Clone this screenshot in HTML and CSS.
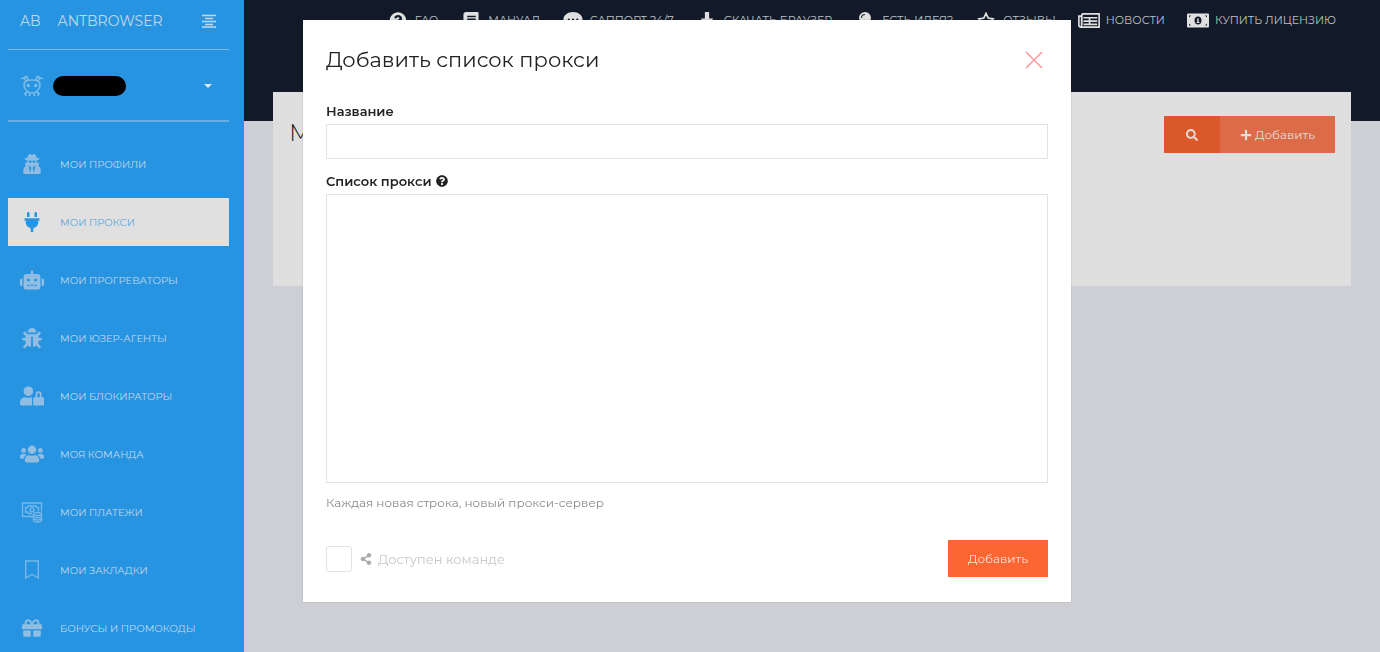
FILE: index.html
```html
<!DOCTYPE html>
<html lang="ru">
<head>
    <meta charset="UTF-8">
    <meta name="viewport" content="width=device-width, initial-scale=1.0">
    <title>Мои прокси - AntBrowser</title>
    <link rel="stylesheet" href="styles.css">
</head>
<body>
    <!-- Иконки -->
    <svg class="sprite" aria-hidden="true">
        <symbol id="question" viewBox="0 0 512 512"><path d="M504 256c0 136.997-111.043 248-248 248S8 392.997 8 256C8 119.083 119.043 8 256 8s248 111.083 248 248zM262.655 90c-54.497 0-89.255 22.957-116.549 63.758-3.536 5.286-2.353 12.415 2.715 16.258l34.699 26.31c5.205 3.947 12.621 3.008 16.665-2.122 17.864-22.658 30.113-35.797 57.303-35.797 20.429 0 45.698 13.148 45.698 32.958 0 14.976-12.363 22.667-32.534 33.976C247.128 238.528 216 254.941 216 296v4c0 6.627 5.373 12 12 12h56c6.627 0 12-5.373 12-12v-1.333c0-28.462 83.186-29.647 83.186-106.667 0-58.002-60.165-102-116.531-102zM256 338c-25.365 0-46 20.635-46 46 0 25.364 20.635 46 46 46s46-20.636 46-46c0-25.365-20.635-46-46-46z"/></symbol>
        <symbol id="plug" viewBox="0 0 384 512"><path d="M320 32a32 32 0 0 0-64 0v96h64zm48 128H16A16 16 0 0 0 0 176v32a16 16 0 0 0 16 16h16v32a160.07 160.07 0 0 0 128 156.8V512h64v-99.2A160.07 160.07 0 0 0 352 256v-32h16a16 16 0 0 0 16-16v-32a16 16 0 0 0-16-16zM128 32a32 32 0 0 0-64 0v96h64z"/></symbol>
        <symbol id="robot" viewBox="0 0 640 512"><path d="M32 224h32v192H32a32 32 0 0 1-32-32V256a32 32 0 0 1 32-32zm512-48v272a64 64 0 0 1-64 64H160a64 64 0 0 1-64-64V176a80 80 0 0 1 80-80h112V32a32 32 0 0 1 64 0v64h112a80 80 0 0 1 80 80zM264 256a40 40 0 1 0-40 40 40 40 0 0 0 40-40zm-8 128h-64v32h64zm96 0h-64v32h64zm104-128a40 40 0 1 0-40 40 40 40 0 0 0 40-40zm-8 128h-64v32h64zm192-128v128a32 32 0 0 1-32 32h-32V224h32a32 32 0 0 1 32 32z"/></symbol>
        <symbol id="bug" viewBox="0 0 512 512"><path d="M511.988 288.9c-.478 17.43-15.217 31.1-32.653 31.1H424v16c0 21.864-4.882 42.584-13.6 61.145l60.228 60.228c12.496 12.497 12.496 32.758 0 45.255-12.498 12.497-32.759 12.496-45.256 0l-54.736-54.736C345.886 467.965 314.351 480 280 480V236c0-6.627-5.373-12-12-12h-24c-6.627 0-12 5.373-12 12v244c-34.351 0-65.886-12.035-90.636-32.108l-54.736 54.736c-12.498 12.497-32.759 12.496-45.256 0-12.496-12.497-12.496-32.758 0-45.255l60.228-60.228C92.882 378.584 88 357.864 88 336v-16H32.666C15.23 320 .491 306.33.013 288.9-.484 270.816 14.028 256 32 256h56v-58.745l-46.628-46.628c-12.496-12.497-12.496-32.758 0-45.255 12.498-12.497 32.758-12.497 45.256 0L141.255 160h229.489l54.627-54.627c12.498-12.497 32.758-12.497 45.256 0 12.496 12.497 12.496 32.758 0 45.255L424 197.255V256h56c17.972 0 32.484 14.816 31.988 32.9zM257 0c-61.856 0-112 50.144-112 112h224C369 50.144 318.856 0 257 0z"/></symbol>
        <symbol id="users" viewBox="0 0 640 512"><path d="M96 224c35.3 0 64-28.7 64-64s-28.7-64-64-64-64 28.7-64 64 28.7 64 64 64zm448 0c35.3 0 64-28.7 64-64s-28.7-64-64-64-64 28.7-64 64 28.7 64 64 64zm32 32h-64c-17.6 0-33.5 7.1-45.1 18.6 40.3 22.1 68.9 62 75.1 109.4h66c17.7 0 32-14.3 32-32v-32c0-35.3-28.7-64-64-64zm-256 0c61.9 0 112-50.1 112-112S381.9 32 320 32 208 82.1 208 144s50.1 112 112 112zm76.8 32h-8.3c-20.8 10-43.9 16-68.5 16s-47.6-6-68.5-16h-8.3C179.6 288 128 339.6 128 403.2V432c0 26.5 21.5 48 48 48h288c26.5 0 48-21.5 48-48v-28.8c0-63.6-51.6-115.2-115.2-115.2zm-223.7-13.4C161.5 263.1 145.6 256 128 256H64c-35.3 0-64 28.7-64 64v32c0 17.7 14.3 32 32 32h65.9c6.3-47.4 34.9-87.3 75.2-109.4z"/></symbol>
        <symbol id="user-lock" viewBox="0 0 640 512"><path d="M224 256A128 128 0 1 0 96 128a128 128 0 0 0 128 128zm96 64a63.08 63.08 0 0 1 8.1-30.5c-4.8-.5-9.5-1.5-14.5-1.5h-16.7a174.08 174.08 0 0 1-145.8 0h-16.7A134.43 134.43 0 0 0 0 422.4V464a48 48 0 0 0 48 48h280.9a63.54 63.54 0 0 1-8.9-32zm288-32h-32v-80a80 80 0 0 0-160 0v80h-32a32 32 0 0 0-32 32v160a32 32 0 0 0 32 32h224a32 32 0 0 0 32-32V320a32 32 0 0 0-32-32zm-80 0h-64v-80a32 32 0 0 1 64 0z"/></symbol>
        <symbol id="spy" viewBox="0 0 448 512"><path d="M383.9 308.3l23.9-62.6c4-10.5-3.7-21.7-15-21.7h-58.5c11-18.9 17.8-40.6 17.8-64v-.3c39.2-7.8 64-19.1 64-31.7 0-13.3-27.3-25.1-70.1-33-9.2-32.8-27-65.8-40.6-82.8-9.5-11.9-25.9-15.6-39.5-8.8l-27.6 13.8c-9 4.5-19.6 4.5-28.6 0L182.1 3.4c-13.6-6.8-30-3.1-39.5 8.8-13.5 17-31.4 50-40.6 82.8-42.7 7.9-70 19.7-70 33 0 12.6 24.8 23.9 64 31.7v.3c0 23.4 6.8 45.1 17.8 64H56.3c-11.5 0-19.2 11.7-14.7 22.3l25.8 60.2C27.3 329.8 0 372.7 0 422.4v44.8C0 491.9 20.1 512 44.8 512h358.4c24.7 0 44.8-20.1 44.8-44.8v-44.8c0-48.4-25.8-90.4-64.1-114.1zM176 480l-41.6-192 49.6 32 24 40-32 120zm96 0l-32-120 24-40 49.6-32L272 480zm41.7-298.5c-3.9 11.9-7 24.6-16.5 33.4-10.1 9.3-48 22.4-64-25-2.8-8.4-15.4-8.4-18.3 0-17 50.2-56 32.4-64 25-9.5-8.8-12.7-21.5-16.5-33.4-.8-2.5-6.3-5.7-6.3-5.8v-10.8c28.3 3.6 61 5.8 96 5.8s67.7-2.1 96-5.8v10.8c-.1.1-5.6 3.2-6.4 5.8z"/></symbol>
        <symbol id="gift" viewBox="0 0 512 512"><path d="M32 448c0 17.7 14.3 32 32 32h160V320H32v128zm256 32h160c17.7 0 32-14.3 32-32V320H288v160zm192-320h-42.1c6.2-12.1 10.1-25.5 10.1-40 0-48.5-39.5-88-88-88-41.6 0-68.5 21.3-103 68.3-34.5-47-61.4-68.3-103-68.3-48.5 0-88 39.5-88 88 0 14.5 3.8 27.9 10.1 40H32c-17.7 0-32 14.3-32 32v80c0 8.8 7.2 16 16 16h480c8.8 0 16-7.2 16-16v-80c0-17.7-14.3-32-32-32zm-326.1 0c-22.1 0-40-17.9-40-40s17.9-40 40-40c19.9 0 34.6 3.3 86.1 80h-86.1zm206.1 0h-86.1c51.4-76.5 65.7-80 86.1-80 22.1 0 40 17.9 40 40s-17.9 40-40 40z"/></symbol>
        <symbol id="search" viewBox="0 0 512 512"><path d="M505 442.7L405.3 343c-4.5-4.5-10.6-7-17-7H372c27.6-35.3 44-79.7 44-128C416 93.1 322.9 0 208 0S0 93.1 0 208s93.1 208 208 208c48.3 0 92.7-16.4 128-44v16.3c0 6.4 2.5 12.5 7 17l99.7 99.7c9.4 9.4 24.6 9.4 33.9 0l28.3-28.3c9.4-9.4 9.4-24.6.1-34zM208 336c-70.7 0-128-57.2-128-128 0-70.7 57.2-128 128-128 70.7 0 128 57.2 128 128 0 70.7-57.2 128-128 128z"/></symbol>
        <symbol id="plus" viewBox="0 0 448 512"><path d="M416 208H272V64c0-17.7-14.3-32-32-32h-32c-17.7 0-32 14.3-32 32v144H32c-17.7 0-32 14.3-32 32v32c0 17.7 14.3 32 32 32h144v144c0 17.7 14.3 32 32 32h32c17.7 0 32-14.3 32-32V304h144c17.7 0 32-14.3 32-32v-32c0-17.7-14.3-32-32-32z"/></symbol>
        <symbol id="share" viewBox="0 0 448 512"><path d="M352 320c-22.608 0-43.387 7.819-59.79 20.895l-102.486-64.054a96.551 96.551 0 0 0 0-41.683l102.486-64.054C308.613 184.181 329.392 192 352 192c53.019 0 96-42.981 96-96S405.019 0 352 0s-96 42.981-96 96c0 7.158.79 14.13 2.276 20.841L155.79 180.895C139.387 167.819 118.608 160 96 160c-53.019 0-96 42.981-96 96s42.981 96 96 96c22.608 0 43.387-7.819 59.79-20.895l102.486 64.054A96.301 96.301 0 0 0 256 416c0 53.019 42.981 96 96 96s96-42.981 96-96-42.981-96-96-96z"/></symbol>
        <symbol id="payments" viewBox="0 0 22 22"><g fill="none" stroke="currentColor" stroke-width="1.300"><path d="M12 15.500H1.500V2h19v8.500"/><path d="M11 12.500H7.500L6 11H4.500V6.500H6L7.500 5h7L16 6.500h1.500v3.500"/><circle cx="11" cy="8.800" r="2"/><ellipse cx="16.500" cy="13" rx="4" ry="1.500"/><path d="M12.500 13v6.500c0 2 8 2 8 0V13"/><path d="M12.500 15.500c0 1.500 8 1.500 8 0m-8 2.200c0 1.500 8 1.500 8 0"/></g></symbol>
        <symbol id="bookmark" viewBox="0 0 22 22"><path d="M4.700 2h12.600v17L11 15.200 4.700 19z" fill="none" stroke="currentColor" stroke-width="1.400"/></symbol>
        <symbol id="ant" viewBox="0 0 24 24"><g fill="none" stroke="currentColor" stroke-width="1.600"><path d="M12 6C7 6 4 7.500 4 11c0 4 3.500 8 8 8s8-4 8-8c0-3.500-3-5-8-5z"/><path d="M8.500 6L6.500 2.500 4 3.500M15.500 6l2-3.500 2.500 1M1 4.500l3-.5 2.500 3.500M23 4.500L20 4l-2.500 3.500M8 18l-3 1.500 1 2.500M16 18l3 1.500-1 2.500M10.500 19.500L9 22M13.500 19.500L15 22"/></g><circle cx="8.300" cy="11.500" r="1.700"/><circle cx="15.700" cy="11.500" r="1.700"/></symbol>
        <symbol id="lines" viewBox="0 0 16 14"><path d="M1 1.500h14M4 4.500h8M1 7.500h14M4 10.500h8M1 13h14" stroke="currentColor" stroke-width="1.500"/></symbol>
        <symbol id="manual" viewBox="0 0 16 18"><path fill-rule="evenodd" d="M3 0h12q1 0 1 1v12l-1 1v2h1v2H3q-3 0-3-3V3q0-3 3-3zm1 4v1.500h9V4zm0 3v1.500h9V7zM3 14q-1 1 0 2h10v-2z"/></symbol>
        <symbol id="comment" viewBox="0 0 18 16"><path fill-rule="evenodd" d="M9 0c5 0 9 3 9 7s-4 7-9 7q-2 0-4-1-2 2-5 2 2-2 2-4-2-2-2-4c0-4 4-7 9-7zM5 6a1 1 0 1 0 0 2 1 1 0 0 0 0-2zm4 0a1 1 0 1 0 0 2 1 1 0 0 0 0-2zm4 0a1 1 0 1 0 0 2 1 1 0 0 0 0-2z"/></symbol>
        <symbol id="download" viewBox="0 0 14 16"><path d="M5 0h4v6h4l-6 7-6-7h4zM0 14h14v2H0z"/></symbol>
        <symbol id="idea" viewBox="0 0 12 17"><path fill-rule="evenodd" d="M6 0a6 6 0 0 1 6 6q0 2-2 4l-1 2.500H3L2 10Q0 8 0 6a6 6 0 0 1 6-6zm0 2Q2 2 2 6h1q0-3 3-3zM3 13.500h6v1L7.500 17h-3L3 14.500z"/></symbol>
        <symbol id="star" viewBox="0 0 18 18"><path d="M9 1.500l2.300 4.900 5.200.8-3.800 3.800.9 5.400L9 13.800l-4.600 2.600.9-5.400-3.800-3.800 5.200-.8z" fill="none" stroke="currentColor" stroke-width="1.800"/></symbol>
        <symbol id="news" viewBox="0 0 20 14"><g fill="none" stroke="currentColor" stroke-width="1.500"><path d="M3.500 1h15.700v12H2.500q-1.700 0-1.700-2V3h2.500v8q0 1.500-1 2M3.500 1v10"/><path d="M5 4.500h12.500M5 7.500h12.500M5 10.500h12.500M10.500 4v7"/></g></symbol>
        <symbol id="money" viewBox="0 0 22 14"><path fill-rule="evenodd" d="M1 0h20q1 0 1 1v12q0 1-1 1H1q-1 0-1-1V1q0-1 1-1zm1 2v2l2-2zm16 0l2 2V2zM2 10v2h2zm18 0l-2 2h2zM11 3C9 3 7.500 4.500 7.500 7S9 11 11 11s3.500-1.500 3.500-4S13 3 11 3zm-1 2h1.700v3.500h.8v1h-3v-1h.8V6H10z"/></symbol>
    </svg>

    <div class="page">
        <aside class="sidebar">
            <div class="brand">
                <a href="#" class="brand-short">AB</a>
                <a href="#" class="brand-name">ANTBROWSER</a>
                <button type="button" class="toggle" aria-label="Меню"><svg><use href="#lines"/></svg></button>
            </div>
            <button type="button" class="user" aria-label="Профиль">
                <svg><use href="#ant"/></svg>
                <span class="user-name"></span>
                <span class="caret"></span>
            </button>
            <nav class="menu">
                <a href="#"><svg><use href="#spy"/></svg>МОИ ПРОФИЛИ</a>
                <a href="#" class="active"><svg><use href="#plug"/></svg>МОИ ПРОКСИ</a>
                <a href="#"><svg><use href="#robot"/></svg>МОИ ПРОГРЕВАТОРЫ</a>
                <a href="#"><svg><use href="#bug"/></svg>МОИ ЮЗЕР-АГЕНТЫ</a>
                <a href="#"><svg><use href="#user-lock"/></svg>МОИ БЛОКИРАТОРЫ</a>
                <a href="#"><svg><use href="#users"/></svg>МОЯ КОМАНДА</a>
                <a href="#"><svg class="line-icon"><use href="#payments"/></svg>МОИ ПЛАТЕЖИ</a>
                <a href="#"><svg class="line-icon"><use href="#bookmark"/></svg>МОИ ЗАКЛАДКИ</a>
                <a href="#"><svg><use href="#gift"/></svg>БОНУСЫ И ПРОМОКОДЫ</a>
            </nav>
        </aside>

        <div class="main">
            <header class="topbar">
                <nav class="topnav">
                    <a href="#"><svg><use href="#question"/></svg>FAQ</a>
                    <a href="#"><svg><use href="#manual"/></svg>МАНУАЛ</a>
                    <a href="#"><svg><use href="#comment"/></svg>САППОРТ 24/7</a>
                    <a href="#"><svg><use href="#download"/></svg>СКАЧАТЬ БРАУЗЕР</a>
                    <a href="#"><svg><use href="#idea"/></svg>ЕСТЬ ИДЕЯ?</a>
                    <a href="#"><svg><use href="#star"/></svg>ОТЗЫВЫ</a>
                    <a href="#"><svg><use href="#news"/></svg>НОВОСТИ</a>
                    <a href="#"><svg><use href="#money"/></svg>КУПИТЬ ЛИЦЕНЗИЮ</a>
                </nav>
            </header>
            <section class="card">
                <h1>Мои прокси</h1>
                <div class="actions">
                    <button type="button" class="search-btn" aria-label="Поиск"><svg><use href="#search"/></svg></button>
                    <button type="button" class="add-btn"><svg><use href="#plus"/></svg>Добавить</button>
                </div>
            </section>
        </div>
    </div>

    <!-- Модальное окно -->
    <div class="overlay">
        <form class="modal" role="dialog" aria-labelledby="modal-title">
            <div class="modal-header">
                <h2 id="modal-title">Добавить список прокси</h2>
                <button type="button" class="close" aria-label="Закрыть"><svg viewBox="0 0 18 18"><path d="M1 1l16 16M17 1L1 17" stroke="currentColor" stroke-width="1.500"/></svg></button>
            </div>
            <label for="name">Название</label>
            <input type="text" id="name" class="field">
            <label for="proxies">Список прокси <svg><use href="#question"/></svg></label>
            <textarea id="proxies" class="field"></textarea>
            <p class="hint">Каждая новая строка, новый прокси-сервер</p>
            <div class="modal-footer">
                <label class="check" for="team"><input type="checkbox" id="team"><svg><use href="#share"/></svg>Доступен команде</label>
                <button type="submit" class="submit">Добавить</button>
            </div>
        </form>
    </div>
</body>
</html>
```

FILE: styles.css
```css
* {
    box-sizing: border-box;
}
body {
    margin: 0;
    font-family: Montserrat, Inter, sans-serif;
    font-size: 13px;
    color: #222;
    background-color: #cecfd5;
}
a {
    color: inherit;
    text-decoration: none;
}
button {
    font: inherit;
    color: inherit;
    border: none;
    padding: 0;
    background: none;
    cursor: pointer;
}
svg {
    fill: currentColor;
    flex-shrink: 0;
}
.sprite {
    display: none;
}
.page {
    display: flex;
    height: 100vh;
    overflow: hidden;
}

/* sidebar */
.sidebar {
    width: 244px;
    flex-shrink: 0;
    padding: 0 15px 0 8px;
    background-color: #2794e1;
    color: #c0d7ea;
}
.brand {
    display: flex;
    align-items: center;
    height: 50px;
    padding: 0 12px 8px;
    border-bottom: 1px solid #7cbceb;
    font-size: 14px;
}
.brand-name {
    margin-left: 17px;
}
.toggle {
    margin-left: auto;
}
.toggle svg {
    display: block;
    width: 16px;
    height: 14px;
}
.user {
    display: flex;
    align-items: center;
    width: 100%;
    height: 72px;
    padding: 2px 17px 0 12px;
    border-bottom: 2px solid #68aee2;
}
.user svg {
    width: 24px;
    height: 24px;
    color: #7dbbe9;
}
.user-name {
    width: 73px;
    height: 20px;
    margin-left: 9px;
    border-radius: 10px;
    background-color: #000;
}
.caret {
    margin-left: auto;
    border: 4px solid transparent;
    border-top-color: #dbe7f0;
    border-bottom: none;
}
.menu {
    display: flex;
    flex-direction: column;
    gap: 10px;
    padding-top: 18px;
}
.menu a {
    display: flex;
    align-items: center;
    gap: 16px;
    height: 48px;
    padding-left: 12px;
    font-size: 10px;
}
.menu svg {
    width: 24px;
    height: 20px;
    color: #91bde2;
}
.menu .line-icon {
    height: 22px;
    color: #78b7e7;
}
.menu .active {
    background-color: #e0e0e0;
    color: #5ba5dd;
}
.menu .active svg {
    color: #2794e1;
}

/* content */
.main {
    flex: 1;
    min-width: 0;
}
.topbar {
    height: 121px;
    background-color: #121a29;
}
.topnav {
    display: flex;
    justify-content: flex-end;
    gap: 22px;
    padding: 10px 44px 0 0;
    color: #bfc1c4;
    font-size: 11px;
    line-height: 20px;
    white-space: nowrap;
}
.topnav a {
    display: flex;
    align-items: center;
    gap: 6px;
}
.topnav svg {
    width: 22px;
    height: 17px;
    color: #e0e0e0;
}
.card {
    display: flex;
    justify-content: space-between;
    align-items: flex-start;
    min-height: 194px;
    margin: -29px 29px 0;
    padding: 24px 16px;
    background-color: #dfdfdf;
}
.card h1 {
    margin: 0;
    font-size: 24px;
    line-height: 34px;
    font-weight: 300;
}
.actions {
    display: flex;
    color: #e5dcd9;
    font-size: 12px;
}
.actions button {
    display: flex;
    align-items: center;
    justify-content: center;
    gap: 3px;
    height: 37px;
}
.actions svg {
    width: 12px;
    height: 12px;
}
.search-btn {
    width: 56px;
    background-color: #db582b;
}
.add-btn {
    width: 115px;
    background-color: #dc6c47;
}

/* modal */
.overlay {
    position: fixed;
    inset: 0;
    display: flex;
    justify-content: center;
    align-items: flex-start;
    padding: 20px 6px 0 0;
}
.modal {
    width: 100%;
    max-width: 768px;
    padding: 23px 23px 25px;
    background-color: #fff;
    box-shadow: 0 0 1px rgba(0,0,0,0.3);
}
.modal-header {
    display: flex;
    align-items: center;
    justify-content: space-between;
    margin-bottom: 23px;
}
.modal-header h2 {
    margin: 0;
    font-size: 21px;
    line-height: 34px;
    font-weight: 400;
}
.close {
    margin-right: 5px;
    color: #ff9a9a;
}
.close svg {
    display: block;
    width: 18px;
    height: 18px;
}
.modal label {
    display: flex;
    align-items: center;
    gap: 4px;
    font-weight: 600;
    line-height: 22px;
}
.modal label svg {
    width: 12px;
    height: 12px;
}
.field {
    display: block;
    width: 100%;
    height: 35px;
    margin: 2px 0 11px;
    padding: 6px 12px;
    border: 1px solid #e3e3e3;
    background-color: #fff;
    font: inherit;
    resize: none;
}
textarea.field {
    height: 289px;
}
.hint {
    margin: 0;
    color: #888;
    font-size: 12px;
    line-height: 18px;
}
.modal-footer {
    display: flex;
    align-items: center;
    justify-content: space-between;
    margin-top: 28px;
}
.modal-footer .check {
    gap: 6px;
    color: #c8c8c8;
    font-weight: 400;
}
.check input {
    appearance: none;
    width: 26px;
    height: 26px;
    margin: 0 2px 0 0;
    border: 1px solid #e3e3e3;
    border-radius: 3px;
}
.check svg {
    color: #aaa;
}
.submit {
    width: 100px;
    height: 37px;
    background-color: #fb6633;
    color: #ffe0d6;
    font-size: 12px;
}
```
